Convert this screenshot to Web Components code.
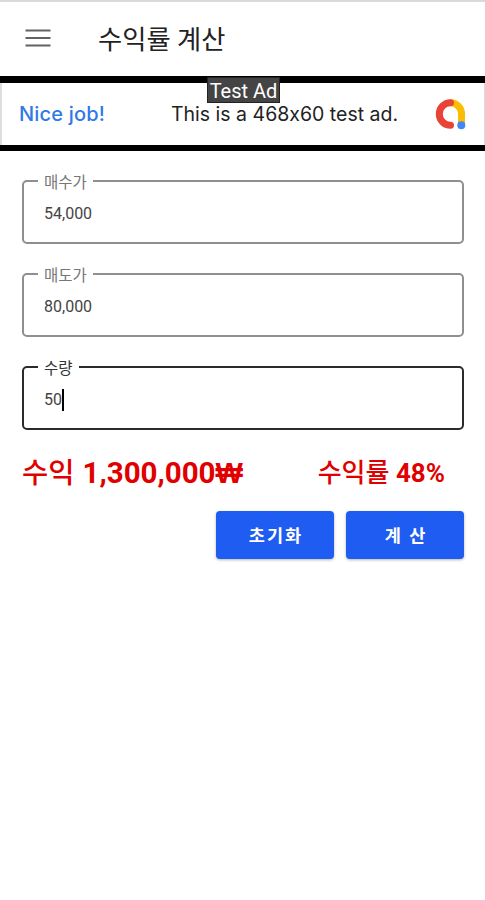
<!DOCTYPE html>
<html lang="ko">
<head>
<meta charset="utf-8">
<meta name="viewport" content="width=device-width, initial-scale=1">
<title>수익률 계산</title>
<style>
  body {
    margin: 0;
    background: #fff;
    color: #222;
    font-family: Roboto, "Noto Sans CJK KR", sans-serif;
  }
</style>
</head>
<body>
<profit-page>
  <app-header slot="header">수익률 계산</app-header>
  <ad-banner slot="ad" badge="Test Ad">
    <span slot="lead">Nice job!</span>
    <span>This is a 468x60 test ad.</span>
  </ad-banner>
  <outlined-field label="매수가" value="54,000"></outlined-field>
  <outlined-field label="매도가" value="80,000"></outlined-field>
  <outlined-field label="수량" value="50" active></outlined-field>
  <profit-result label="수익" amount="1,300,000" currency="₩" rate-label="수익률" rate="48%"></profit-result>
  <action-button slot="actions">초기화</action-button>
  <action-button slot="actions">계 산</action-button>
</profit-page>

<script>
class ProfitPage extends HTMLElement {
  constructor() {
    super();
    this.attachShadow({ mode: 'open' });
  }

  connectedCallback() {
    this.shadowRoot.innerHTML = `
      <slot name="header"></slot>
      <slot name="ad"></slot>
      <main>
        <slot></slot>
        <div class="actions"><slot name="actions"></slot></div>
      </main>

      <style>
        :host {
          display: block;
          min-height: 900px;
          box-sizing: border-box;
          border-top: 2px solid #d9d9d9;
        }

        main {
          display: flex;
          flex-direction: column;
          gap: 29px;
          padding: 29px 21px 0 22px;
        }

        .actions {
          display: flex;
          justify-content: flex-end;
          gap: 12px;
          margin-top: -7px;
        }
      </style>
    `;
  }
}

class AppHeader extends HTMLElement {
  constructor() {
    super();
    this.attachShadow({ mode: 'open' });
  }

  connectedCallback() {
    this.shadowRoot.innerHTML = `
      <svg width="26" height="18" viewBox="0 0 26 18" stroke="#626262" stroke-width="2">
        <path d="M0.500 1.500h25M0.500 9h25M0.500 16.500h25"/>
      </svg>
      <h1><slot></slot></h1>

      <style>
        :host {
          display: flex;
          align-items: center;
          height: 74px;
          box-sizing: border-box;
          padding: 0 25px 2px;
        }

        svg {
          flex: none;
        }

        h1 {
          margin: 3px 0 0 47px;
          font-size: 26.3px;
          font-weight: 400;
          line-height: 36px;
          white-space: nowrap;
        }
      </style>
    `;
  }
}

class AdBanner extends HTMLElement {
  constructor() {
    super();
    this.attachShadow({ mode: 'open' });
  }

  connectedCallback() {
    this.shadowRoot.innerHTML = `
      <div class="lead"><slot name="lead"></slot></div>
      <div class="text"><slot></slot></div>
      <svg width="32" height="32" viewBox="0 0 32 32" fill="none" stroke-width="7" stroke-linecap="round">
        <path d="M16.500 4.800a11 11 0 0 1 11 11v10" stroke="#fbbc04"/>
        <path d="M16.500 4.800a11.200 11.200 0 1 0 0 22.400" stroke="#e94335"/>
        <circle cx="27.300" cy="27.300" r="4" fill="#4285f4"/>
      </svg>
      <div class="badge">${this.getAttribute('badge')}</div>

      <style>
        :host {
          position: relative;
          display: flex;
          align-items: center;
          height: 75px;
          box-sizing: border-box;
          border: solid #000;
          border-width: 7px 0 6px;
          padding: 0 19px 0 18px;
          font-family: Inter, sans-serif;
          font-feature-settings: "calt" 0;
          box-shadow: inset 2px 0 #dedede, inset -1px 0 #dedede;
        }

        .lead {
          width: 152px;
          padding-left: 1px;
          color: #3079e6;
          font-size: 20px;
          font-weight: 500;
          letter-spacing: .2px;
          white-space: nowrap;
        }

        .text {
          flex: 1;
          font-size: 19.5px;
          white-space: nowrap;
        }

        svg {
          flex: none;
        }

        .badge {
          position: absolute;
          top: -6px;
          left: 207px;
          width: 73px;
          height: 26px;
          box-sizing: border-box;
          border: 1px solid #222;
          background: #444;
          color: #fff;
          font: 20px/26px Roboto, sans-serif;
          text-align: center;
          white-space: nowrap;
        }
      </style>
    `;
  }
}

class OutlinedField extends HTMLElement {
  constructor() {
    super();
    this.attachShadow({ mode: 'open' });
  }

  connectedCallback() {
    const caret = this.hasAttribute('active') ? '<i></i>' : '';

    this.shadowRoot.innerHTML = `
      <fieldset>
        <legend>${this.getAttribute('label')}</legend>
        <div class="value">${this.getAttribute('value')}${caret}</div>
      </fieldset>

      <style>
        :host {
          display: block;
          height: 64px;
          --line: #8f8f8f;
          --label: #777;
        }

        :host([active]) {
          --line: #2b2b2b;
          --label: #333;
        }

        fieldset {
          height: 74px;
          box-sizing: border-box;
          margin: -10px 0 0;
          border: 2px solid var(--line);
          border-radius: 5px;
          padding: 10px 14px 0;
        }

        legend {
          height: 22px;
          padding: 0 6px;
          color: var(--label);
          font-size: 15.5px;
          line-height: 27px;
        }

        .value {
          display: flex;
          align-items: center;
          height: 24px;
          padding-left: 6px;
          color: #444;
          font-size: 16px;
          line-height: 24px;
        }

        i {
          width: 2px;
          height: 22px;
          background: #000;
        }
      </style>
    `;
  }
}

class ProfitResult extends HTMLElement {
  constructor() {
    super();
    this.attachShadow({ mode: 'open' });
  }

  connectedCallback() {
    this.shadowRoot.innerHTML = `
      <div class="profit">${this.getAttribute('label')} <b class="amount">${this.getAttribute('amount')}</b><b class="currency">${this.getAttribute('currency')}</b></div>
      <div class="rate">${this.getAttribute('rate-label')} <b>${this.getAttribute('rate')}</b></div>

      <style>
        :host {
          display: flex;
          justify-content: space-between;
          align-items: center;
          height: 30px;
          padding-right: 19px;
          color: #e00000;
          font-weight: 500;
          white-space: nowrap;
        }

        b {
          font-weight: 700;
        }

        .profit {
          margin-top: -7px;
          font-size: 28.5px;
        }

        .amount {
          margin-left: 1px;
          font-size: 29.5px;
        }

        .currency {
          font-family: "Open Sans", sans-serif;
          font-size: 29px;
        }

        .rate {
          margin-top: -7px;
          font-size: 26px;
        }
      </style>
    `;
  }
}

class ActionButton extends HTMLElement {
  constructor() {
    super();
    this.attachShadow({ mode: 'open' });
  }

  connectedCallback() {
    this.shadowRoot.innerHTML = `
      <button><slot></slot></button>

      <style>
        :host {
          display: block;
        }

        button {
          width: 118px;
          height: 48px;
          border: 0;
          border-radius: 4px;
          padding: 0 0 2px 2px;
          background: #1f5cf2;
          box-shadow: 0 1px 3px rgba(0, 0, 0, .3);
          color: #fff;
          font: inherit;
          font-size: 17.5px;
          font-weight: 700;
          letter-spacing: 2px;
        }
      </style>
    `;
  }
}

customElements.define('profit-page', ProfitPage);
customElements.define('app-header', AppHeader);
customElements.define('ad-banner', AdBanner);
customElements.define('outlined-field', OutlinedField);
customElements.define('profit-result', ProfitResult);
customElements.define('action-button', ActionButton);
</script>
</body>
</html>
